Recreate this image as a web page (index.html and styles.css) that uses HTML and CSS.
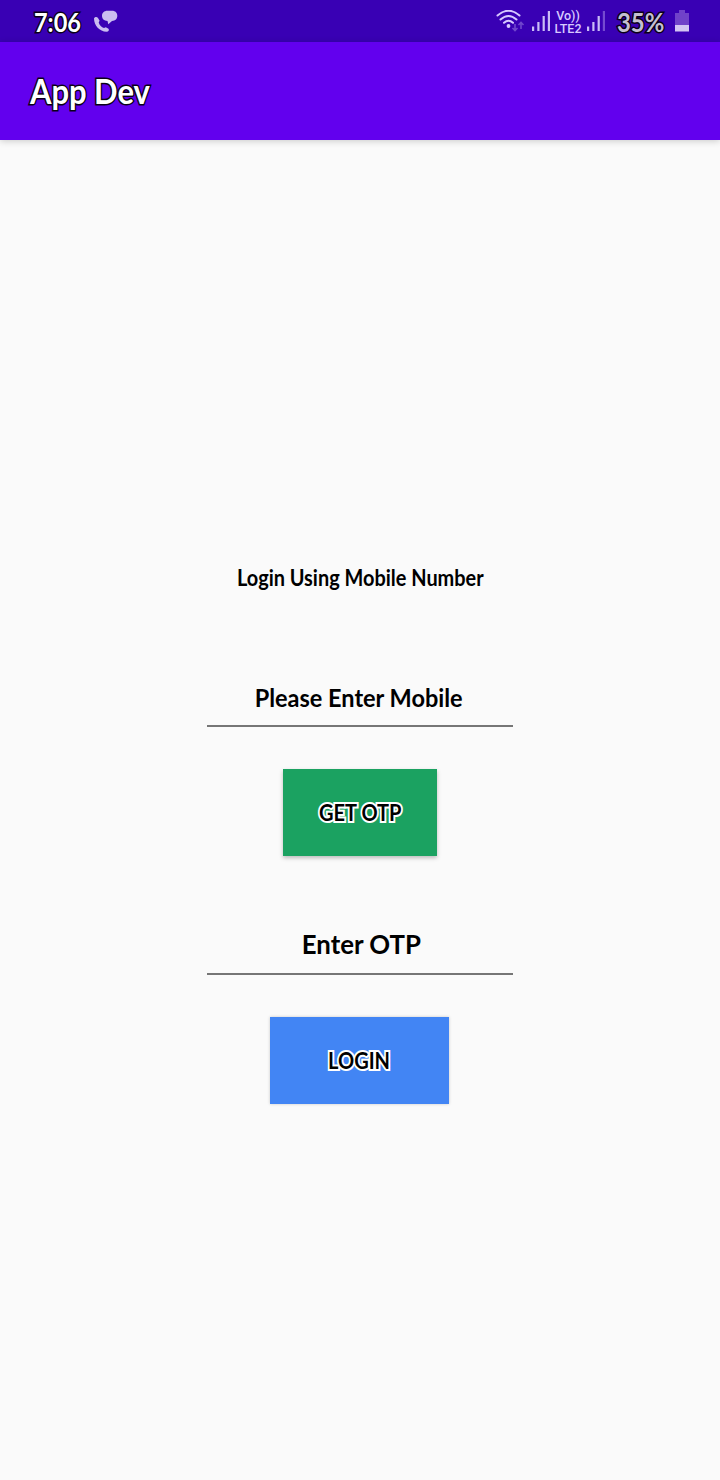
FILE: index.html
```html
<!DOCTYPE html>
<html lang="en">
<head>
<meta charset="utf-8">
<title>App Dev</title>
<link rel="stylesheet" href="styles.css">
</head>
<body>
<header class="status">
  <span class="clock outline-dark">7:06</span>
  <svg class="call" width="25" height="24" viewBox="0 0 25 24" fill="#cabdf0">
    <path d="M0 8.500 C.5 7 2.800 6.500 4 8 L5.600 10.800 L4.700 12.500 C5.500 15.200 7.500 17.300 10 18 L11.800 17.300 L14.500 18.800 C15.500 20 14.500 21.800 12.500 21.800 C5.500 21.500 0 15.500 0 8.500Z"/>
    <path d="M13.500 .8 H18 C21.500 .8 23.300 3 23.300 5.800 C23.300 8.800 21.500 11 18 11 L14.300 14.300 L13.500 11 C10 11 8 8.800 8 5.800 C8 3 10 .8 13.500 .8Z"/>
  </svg>
  <svg class="wifi" width="29" height="24" viewBox="0 0 29 24" fill="none" stroke="#d7c9ff" stroke-width="2" stroke-linecap="round">
    <path d="M1.500 5.500 Q12.500 -4 23.500 5.500"/>
    <path d="M4.500 9.500 Q12.500 2.500 20.500 9.500"/>
    <path d="M8 12.800 Q12.500 8.800 17 12.800"/>
    <circle cx="12.500" cy="16" r="1.900" fill="#d7c9ff" stroke="none"/>
    <g stroke="#7046cc" stroke-width="1.600" stroke-linecap="butt"><path d="M19 14 V20.500 M16.500 18 L19 20.500 L21.500 18 M25 19 V12.500 M22.500 15 L25 12.500 L27.500 15"/></g>
  </svg>
  <svg class="bars" width="20" height="22" viewBox="0 0 20 22" fill="#cabdf5">
    <path d="M0 16.500h2.200v4.500H0z M5.300 12h2.200v9H5.300z M10.600 6h2.200v15h-2.200z M15.800 1H18v20h-2.200z"/>
  </svg>
  <div class="volte"><span>Vo))</span><span>LTE2</span></div>
  <svg class="bars" width="20" height="22" viewBox="0 0 20 22" fill="#cabdf5">
    <path d="M0 16.500h2.200v4.500H0z M5.300 12h2.200v9H5.300z M10.600 6h2.200v15h-2.200z"/><path fill="#754bd0" d="M15.800 1H18v20h-2.200z"/>
  </svg>
  <span class="percent outline-dark">35%</span>
  <svg class="battery" width="14" height="22" viewBox="0 0 14 22"><path fill="#7042c9" d="M4 0h6v3h4v12H0V3h4z"/><path fill="#d3c5f2" d="M0 15h14v6.500H0z"/></svg>
</header>
<div class="appbar"><h1 class="title outline-dark">App Dev</h1></div>
<main class="form">
  <p class="heading">Login Using Mobile Number</p>
  <div class="field mobile"><span>Please Enter Mobile</span></div>
  <button class="btn get"><span class="outline-light">GET OTP</span></button>
  <div class="field otp"><span>Enter OTP</span></div>
  <button class="btn login"><span class="outline-light">LOGIN</span></button>
</main>
</body>
</html>
```
FILE: styles.css
```css
* { box-sizing: border-box; }
body {
  margin: 0;
  width: 720px;
  height: 1480px;
  background: #fafafa;
  color: #000;
  font-family: Lato, "Open Sans", sans-serif;
  font-weight: 700;
  overflow: hidden;
}
.status {
  display: flex;
  align-items: flex-start;
  height: 42px;
  padding: 10px 0 0 34px;
  background: #3900b4;
  white-space: nowrap;
}
.status svg { flex: none; }
.outline-dark {
  color: #fff;
  -webkit-text-stroke: 3px #0b0018;
  paint-order: stroke fill;
}
.outline-light {
  -webkit-text-stroke: 4px #fff;
  paint-order: stroke fill;
}
/* Lettering is condensed slightly with a horizontal scale. */
.clock { width: 46px; font-size: 27px; line-height: 24px; transform: scaleX(.87); transform-origin: left; }
.call { margin-left: 14px; }
.wifi { margin-left: 377px; }
.bars { margin-left: 7px; }
.volte {
  display: flex;
  flex-direction: column;
  width: 28px;
  margin: -1px 0 0 2px;
  color: #d7c9ff;
  font: 500 12.500px/13px Roboto, sans-serif;
  text-align: center;
}
.volte + .bars { margin-left: 5px; }
.percent { width: 48px; margin-left: 10px; color: #c5bfd0; font-size: 26px; line-height: 24px; transform: scaleX(.92); transform-origin: left; }
.battery { margin-left: 10px; }
.appbar {
  display: flex;
  align-items: center;
  height: 98px;
  padding-left: 30px;
  background: #6200ee;
  box-shadow: 0 1px 7px rgba(0, 0, 0, .2);
}
.title { margin: 0; font-size: 34px; line-height: 40px; transform: scaleX(.91); transform-origin: left; }
.form { display: flex; flex-direction: column; align-items: center; padding-top: 423px; }
.heading { margin: 0; font-size: 22px; line-height: 30px; white-space: nowrap; transform: scaleX(.905); }
.field {
  width: 306px;
  border-bottom: 2px solid #767676;
  text-align: center;
  white-space: nowrap;
}
.field span, .btn span { display: inline-block; }
.mobile { height: 44px; margin-top: 89px; padding-right: 2px; font-size: 25px; line-height: 30px; }
.mobile span { transform: scaleX(.94); }
.mobile { height: 45px; }
.otp { height: 46px; margin-top: 73px; padding-left: 2px; font-size: 27px; line-height: 30px; }
.otp span { transform: scaleX(.955); }
.btn {
  height: 87px;
  margin: 42px 0 0;
  padding: 0;
  border: 0;
  box-shadow: 0 2px 4px rgba(0, 0, 0, .25);
  color: #000;
  font: 700 22px/30px Lato, sans-serif;
}
.get { width: 154px; background: #1ba261; }
.get span { transform: scaleX(.91); }
.login { width: 179px; margin-right: 1px; background: #4285f4; box-shadow: 0 0 3px rgba(0, 0, 0, .2); }
.login span { transform: scaleX(.91); }
```
